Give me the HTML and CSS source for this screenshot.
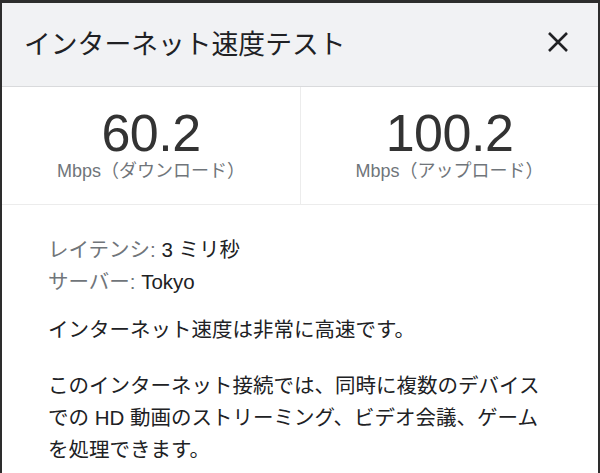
FILE: index.html
```html
<!DOCTYPE html>
<html lang="ja">
<head>
<meta charset="utf-8">
<title>インターネット速度テスト</title>
<link rel="stylesheet" href="styles.css">
</head>
<body>
<div class="dialog">
  <header class="head">
    <h1 class="title">インターネット速度テスト</h1>
    <button class="close" aria-label="閉じる">
      <svg width="22" height="22" viewBox="0 0 22 22"><path d="M2 2 L20 20 M20 2 L2 20" stroke="#202124" stroke-width="2.6" stroke-linecap="butt" fill="none"/></svg>
    </button>
  </header>
  <section class="metrics">
    <div class="metric">
      <div class="num">60.2</div>
      <div class="unit">Mbps（ダウンロード）</div>
    </div>
    <div class="metric">
      <div class="num">100.2</div>
      <div class="unit">Mbps（アップロード）</div>
    </div>
  </section>
  <section class="body">
    <div class="info"><span class="lbl">レイテンシ:</span> 3 ミリ秒</div>
    <div class="info"><span class="lbl">サーバー:</span> Tokyo</div>
    <p class="p1">インターネット速度は非常に高速です。</p>
    <p class="p2">このインターネット接続では、同時に複数のデバイスでの HD 動画のストリーミング、ビデオ会議、ゲームを処理できます。</p>
  </section>
</div>
</body>
</html>
```

FILE: styles.css
```css
html, body {
  margin: 0;
  padding: 0;
  height: 100%;
  background: #2d2d2d;
  overflow: hidden;
}
body {
  font-family: "Liberation Sans", "Noto Sans CJK JP", sans-serif;
  color: #202124;
}
.dialog {
  margin: 3px 2px 0;
  background: #fff;
  height: 470px;
  overflow: hidden;
}
.head {
  height: 84px;
  background: #f1f2f4;
  border-bottom: 1px solid #d9dadc;
  display: flex;
  align-items: center;
  justify-content: space-between;
  padding: 0 29px 0 22px;
  box-sizing: border-box;
}
.title {
  margin: 0;
  font-size: 26.8px;
  font-weight: 400;
  color: #202124;
  line-height: 1;
  padding-top: 2px;
}
.close {
  background: none;
  border: 0;
  padding: 0;
  width: 22px;
  height: 22px;
  display: flex;
  margin-top: -6px;
}
.metrics {
  display: grid;
  grid-template-columns: 1fr 1fr;
  height: 118px;
  border-bottom: 1px solid #ececec;
  box-sizing: border-box;
}
.metric {
  display: flex;
  flex-direction: column;
  align-items: center;
  justify-content: center;
  padding-bottom: 2px;
}
.metric + .metric {
  border-left: 1px solid #ececec;
}
.num {
  font-size: 52px;
  line-height: 52px;
  color: #333;
  letter-spacing: -0.5px;
}
.unit {
  font-size: 18px;
  line-height: 22px;
  color: #70757a;
  margin-top: 1px;
}
.body {
  padding: 29px 46px 0;
  font-size: 20.5px;
  line-height: 32px;
}
.info {
  color: #202124;
}
.lbl {
  color: #70757a;
}
.p1 {
  margin: 16px 0 0;
}
.p2 {
  margin: 24px 0 0;
}
```
